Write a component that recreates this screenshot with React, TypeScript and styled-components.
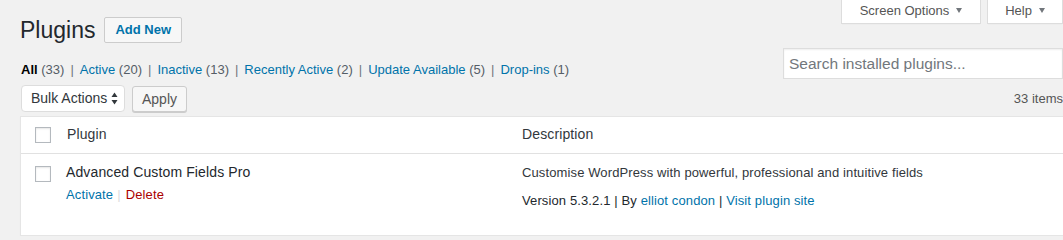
import React from 'react';
import styled, { createGlobalStyle } from 'styled-components';

const Global = createGlobalStyle`
  html, body { margin: 0; padding: 0; background: #f1f1f1; }
  body {
    font-family: "Liberation Sans", Arial, sans-serif;
    font-size: 13px;
    color: #444;
    line-height: 1.4;
    overflow: hidden;
  }
  * { box-sizing: border-box; }
`;

const Page = styled.div`
  padding: 0 0 0 20px;
`;

const TopBar = styled.div`
  display: flex;
  justify-content: space-between;
  align-items: flex-start;
`;

const TitleRow = styled.div`
  display: flex;
  align-items: center;
  padding-top: 15px;
`;

const Title = styled.h1`
  margin: 0;
  font-size: 23px;
  font-weight: 400;
  line-height: 30px;
  color: #23282d;
`;

const AddNew = styled.a`
  margin-left: 9px;
  height: 26px;
  padding: 0 10px;
  display: inline-flex;
  align-items: center;
  border: 1px solid #ccc;
  border-radius: 2px;
  background: #f7f7f7;
  color: #0073aa;
  font-weight: 700;
  font-size: 13px;
  text-decoration: none;
`;

const ScreenMeta = styled.div`
  display: flex;
  gap: 6px;
`;

const MetaTab = styled.button<{ $w: number }>`
  width: ${(p) => p.$w}px;
  height: 24px;
  display: flex;
  align-items: center;
  justify-content: center;
  padding: 0 0 2px;
  background: #fff;
  border: 1px solid #ddd;
  border-top: none;
  box-shadow: 0 1px 1px -1px rgba(0, 0, 0, 0.1);
  font-family: inherit;
  font-size: 13px;
  color: #555;
  &::after {
    content: '';
    margin-left: 7px;
    border-left: 3.5px solid transparent;
    border-right: 3.5px solid transparent;
    border-top: 5px solid #72777c;
  }
`;

const FilterRow = styled.div`
  display: flex;
  justify-content: space-between;
  align-items: flex-start;
`;

const SubSubSub = styled.ul`
  display: flex;
  list-style: none;
  margin: 0;
  padding: 15px 0 0 1px;
  line-height: 20px;
  font-size: 13px;
  color: #555;
`;

const FilterItem = styled.li`
  display: flex;
  white-space: pre;
`;

const FilterLink = styled.a<{ $current?: boolean }>`
  color: ${(p) => (p.$current ? '#000' : '#0073aa')};
  font-weight: ${(p) => (p.$current ? 700 : 400)};
  text-decoration: none;
`;

const Count = styled.span`
  color: #555d66;
  font-weight: 400;
`;

const Bar = styled.span`
  color: #72777c;
  margin: 0 6px;
`;

const Search = styled.input`
  margin-top: 3px;
  width: 280px;
  height: 31px;
  border: 1px solid #ddd;
  background: #fff;
  box-shadow: inset 0 1px 2px rgba(0, 0, 0, 0.07);
  padding: 0 5px;
  font-family: inherit;
  font-size: 15.5px;
  color: #32373c;
  outline: none;
  &::placeholder {
    color: #72777c;
  }
`;

const TableNav = styled.div`
  display: flex;
  align-items: center;
  padding-top: 6px;
`;

const BulkSelect = styled.div`
  width: 104px;
  height: 27px;
  margin-left: 1px;
  margin-top: -1px;
  display: flex;
  align-items: center;
  padding: 0 6px 0 9px;
  background: #fff;
  border: 1px solid #ddd;
  border-radius: 4px;
  font-size: 14px;
  color: #32373c;
  svg {
    margin-left: auto;
  }
`;

const Apply = styled.button`
  margin-left: 7px;
  width: 55px;
  height: 26px;
  border: 1px solid #ccc;
  border-radius: 3px;
  background: #f7f7f7;
  box-shadow: 0 1px 0 #ccc;
  font-family: inherit;
  font-size: 14px;
  color: #555;
  padding: 0;
`;

const ItemsCount = styled.span`
  margin-left: auto;
  font-size: 13px;
  color: #555;
`;

const Table = styled.div`
  margin-top: 4px;
  border: 1px solid #e5e5e5;
  border-right: none;
  background: #fff;
  box-shadow: 0 1px 1px rgba(0, 0, 0, 0.04);
  letter-spacing: 0.12px;
`;

const Row = styled.div<{ $head?: boolean }>`
  display: grid;
  grid-template-columns: 36px 455px 1fr;
  border-bottom: ${(p) => (p.$head ? '1px solid #e1e1e1' : 'none')};
`;

const CheckCell = styled.div<{ $top: number }>`
  padding: ${(p) => p.$top}px 0 0 14px;
`;

const Checkbox = styled.span`
  display: block;
  width: 16px;
  height: 16px;
  border: 1px solid #b4b9be;
  background: #fff;
  box-shadow: inset 0 1px 2px rgba(0, 0, 0, 0.1);
`;

const HeadCell = styled.div`
  padding: 8px 10px;
  font-size: 14px;
  line-height: 19.6px;
  color: #32373c;
`;

const NameCell = styled.div`
  padding: 9px 10px 24px 9px;
`;

const PluginTitle = styled.strong`
  display: block;
  font-weight: 400;
  font-size: 14px;
  line-height: 19.6px;
  color: #23282d;
`;

const RowActions = styled.div`
  margin-top: 3px;
  line-height: 19.5px;
  font-size: 13px;
`;

const ActionLink = styled.a<{ $danger?: boolean }>`
  color: ${(p) => (p.$danger ? '#a00' : '#0073aa')};
  text-decoration: none;
`;

const ActionSep = styled.span`
  color: #ddd;
  margin: 0 5px 0 4px;
`;

const DescCell = styled.div`
  padding: 9px 10px 24px;
  font-size: 13px;
`;

const DescText = styled.p`
  margin: 0;
  line-height: 20px;
  color: #32373c;
`;

const Version = styled.div`
  margin-top: 8px;
  line-height: 20px;
  color: #23282d;
`;

const VLink = styled.a`
  color: #0073aa;
  text-decoration: none;
`;

const SelectArrows = () => (
  <svg width="7" height="13" viewBox="0 0 7 13">
    <path d="M3.5 0.5 L6.5 5 L0.5 5 Z" fill="#32373c" />
    <path d="M3.5 12.5 L6.5 8 L0.5 8 Z" fill="#32373c" />
  </svg>
);

const filters = [
  { label: 'All', count: 33, current: true },
  { label: 'Active', count: 20 },
  { label: 'Inactive', count: 13 },
  { label: 'Recently Active', count: 2 },
  { label: 'Update Available', count: 5 },
  { label: 'Drop-ins', count: 1 },
];

export default function App() {
  return (
    <>
      <Global />
      <Page>
        <TopBar>
          <TitleRow>
            <Title>Plugins</Title>
            <AddNew href="#">Add New</AddNew>
          </TitleRow>
          <ScreenMeta>
            <MetaTab $w={140}>Screen Options</MetaTab>
            <MetaTab $w={76}>Help</MetaTab>
          </ScreenMeta>
        </TopBar>

        <FilterRow>
          <SubSubSub>
            {filters.map((f, i) => (
              <FilterItem key={f.label}>
                <FilterLink href="#" $current={f.current}>
                  {f.label} <Count>({f.count})</Count>
                </FilterLink>
                {i < filters.length - 1 && <Bar>|</Bar>}
              </FilterItem>
            ))}
          </SubSubSub>
          <Search placeholder="Search installed plugins..." />
        </FilterRow>

        <TableNav>
          <BulkSelect>
            Bulk Actions
            <SelectArrows />
          </BulkSelect>
          <Apply>Apply</Apply>
          <ItemsCount>33 items</ItemsCount>
        </TableNav>

        <Table>
          <Row $head>
            <CheckCell $top={10}>
              <Checkbox />
            </CheckCell>
            <HeadCell>Plugin</HeadCell>
            <HeadCell>Description</HeadCell>
          </Row>
          <Row>
            <CheckCell $top={12}>
              <Checkbox />
            </CheckCell>
            <NameCell>
              <PluginTitle>Advanced Custom Fields Pro</PluginTitle>
              <RowActions>
                <ActionLink href="#">Activate</ActionLink>
                <ActionSep>|</ActionSep>
                <ActionLink href="#" $danger>
                  Delete
                </ActionLink>
              </RowActions>
            </NameCell>
            <DescCell>
              <DescText>Customise WordPress with powerful, professional and intuitive fields</DescText>
              <Version>
                Version 5.3.2.1 | By <VLink href="#">elliot condon</VLink> |{' '}
                <VLink href="#">Visit plugin site</VLink>
              </Version>
            </DescCell>
          </Row>
        </Table>
      </Page>
    </>
  );
}
